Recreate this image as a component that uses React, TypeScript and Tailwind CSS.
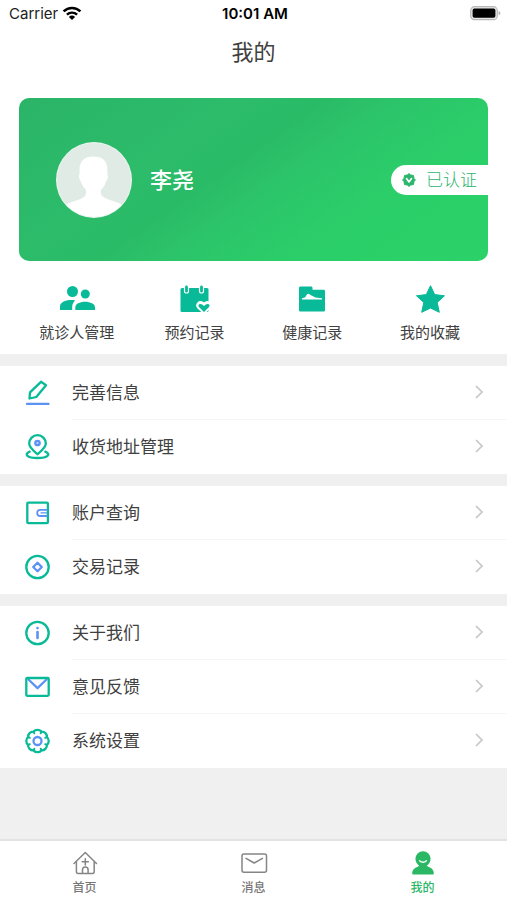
import type { ReactNode } from "react";

type Item = { label: string; icon: ReactNode };

const TEAL = "#08ba97";
const BLUE = "#5b93f5";

function WifiIcon() {
  return (
    <svg width="20" height="16" viewBox="0 0 20 16" aria-hidden="true" fill="none" stroke="#000" strokeWidth="2.600">
      <path d="M1.600 5.400a12 12 0 0 1 16.800 0" />
      <path d="M4.900 8.700a7.300 7.300 0 0 1 10.200 0" strokeWidth="2.400" />
      <path d="M10 14 6.900 10.900a4.400 4.400 0 0 1 6.200 0Z" fill="#000" stroke="none" />
    </svg>
  );
}

function BatteryIcon() {
  return (
    <svg width="31" height="16" viewBox="0 0 31 16" aria-hidden="true">
      <rect x="0.7" y="0.7" width="26.600" height="13" rx="3.800" fill="#e6e6e6" stroke="#b9b9b9" strokeWidth="1.200" />
      <rect x="2.600" y="2.600" width="22.800" height="9.200" rx="1.800" fill="#000" />
      <path d="M28.600 5.100v4.200c1-.4 1.700-1.200 1.700-2.100s-.7-1.700-1.700-2.100Z" fill="#b0b0b0" />
    </svg>
  );
}

function Avatar() {
  return (
    <svg className="shrink-0" width="76" height="76" viewBox="0 0 76 76" role="img" aria-label="头像">
      <defs>
        <clipPath id="avatar-circle">
          <circle cx="38" cy="38" r="37" />
        </clipPath>
      </defs>
      <circle cx="38" cy="38" r="38" fill="#eef5f0" />
      <circle cx="38" cy="38" r="37" fill="#e0ebe5" />
      <path
        clipPath="url(#avatar-circle)"
        fill="#fff"
        d="M37.500 14.500c-9 0-14 4.500-14 13v5c-1 .6-.8 4.500 1.500 7.200 1.200 3.800 3.200 6.600 5 8.300 0 3-.1 4.800-.9 6C27 57 16 59.500 10 62.500V80h56V62.500C60 59.500 49 57 46 54c-.9-1.200-1.100-3-1.100-6 1.900-1.700 3.900-4.500 5-8.300 2.300-2.700 2.500-6.600 1.500-7.200v-5c0-8.500-5-13-13.900-13Z"
      />
    </svg>
  );
}

function VerifiedIcon() {
  return (
    <svg width="14" height="14" viewBox="0 0 14 14" aria-hidden="true">
      <path
        fill="#2cb56c"
        stroke="#2cb56c"
        strokeLinejoin="round"
        d="m7 .6 1.600 1.300 2.900.6.500 2.900L13.400 7l-1.400 1.600-.5 2.900-2.900.6L7 13.400l-1.600-1.300-2.900-.6L2 8.600.6 7 2 5.400l.5-2.900 2.900-.6Z"
      />
      <path d="m4.500 5.600 2.500 3.300 2.500-3.300" fill="none" stroke="#fff" strokeWidth="1.700" strokeLinecap="round" strokeLinejoin="round" />
    </svg>
  );
}

function Chevron() {
  return (
    <svg className="shrink-0" width="10" height="14" viewBox="0 0 10 14" fill="none" stroke="#c7c7c7" strokeWidth="1.700" aria-hidden="true">
      <path d="m1 1 6 6-6 6" />
    </svg>
  );
}

const shortcuts: Item[] = [
  {
    label: "就诊人管理",
    icon: (
      <svg width="36" height="30" viewBox="0 0 36 30" fill={TEAL} aria-hidden="true">
        <circle cx="13.500" cy="7.500" r="5.500" />
        <circle cx="26.300" cy="10" r="4.500" />
        <path d="M1 26v-3.500c0-4 5-6.500 11-6.500 1.500 0 3 .1 4.200.5-1.700 1.500-3 3.500-3 6V26Z" />
        <path d="M16.300 26v-2.500c0-3.500 4.300-5.700 9.700-5.700s10 2.200 10 5.700V26Z" />
      </svg>
    ),
  },
  {
    label: "预约记录",
    icon: (
      <svg width="32" height="30" viewBox="0 0 32 30" aria-hidden="true">
        <rect x="1.500" y="4" width="28" height="24" rx="1.500" fill={TEAL} />
        <path d="M7.500 2v5M22.500 2v5" stroke="#fff" strokeWidth="5.200" strokeLinecap="round" />
        <path d="M7.500 3v4.200M22.500 3v4.200" stroke={TEAL} strokeWidth="2.800" strokeLinecap="round" />
        <path
          d="m25 27.500-5-4.600c-1.700-2.200.6-4.700 3.200-3l1.800 1.300 1.800-1.300c2.600-1.700 4.900.8 3.200 3Z"
          fill={TEAL}
          stroke="#fff"
          strokeWidth="4.400"
          strokeLinejoin="round"
        />
        <path d="m25 28-5-4.900c-1.700-2.200.6-4.300 3.200-2.600l1.800 1.500 1.800-1.500c2.600-1.700 4.900.4 3.200 2.600Z" fill={TEAL} />
      </svg>
    ),
  },
  {
    label: "健康记录",
    icon: (
      <svg width="28" height="30" viewBox="0 0 28 30" aria-hidden="true">
        <path d="M2.500 2.500H13c1 0 1.500.6 1.500 1.500V5.700h11c1 0 1.500.6 1.500 1.500V26c0 1-.6 1.500-1.500 1.500h-23C1.600 27.500 1 27 1 26V4C1 3.100 1.600 2.500 2.500 2.500Z" fill={TEAL} />
        <path d="M4 14.300 7 13.500l2.200-3.500 1.300-.3 2.500 1.600 4.500 2.100 6.500.9v1.100H4Z" fill="#fff" />
      </svg>
    ),
  },
  {
    label: "我的收藏",
    icon: (
      <svg width="32" height="30" viewBox="0 0 32 30" aria-hidden="true">
        <path
          d="m16.500 1.700 4.200 8.900 9.800 1.200-7.300 6.700 2.100 9.800-8.800-4.300-8.800 4.300 2.100-9.800-7.300-6.700 9.800-1.200Z"
          fill={TEAL}
          stroke={TEAL}
          strokeLinejoin="round"
        />
      </svg>
    ),
  },
];

function LineIcon({ children }: { children: ReactNode }) {
  return (
    <svg className="shrink-0" width="26" height="26" viewBox="0 0 26 26" fill="none" stroke={TEAL} strokeWidth="2.300" strokeLinejoin="round" strokeLinecap="round" aria-hidden="true">
      {children}
    </svg>
  );
}

const groups: Item[][] = [
  [
    {
      label: "完善信息",
      icon: (
        <LineIcon>
          <path d="M17 1.800 22 5.200 12.300 17 5.500 18.500 6 12.300Z" />
          <path d="M3 23.900h21.500" stroke={BLUE} />
        </LineIcon>
      ),
    },
    {
      label: "收货地址管理",
      icon: (
        <LineIcon>
          <path d="M13.500 20.200C10.500 17.600 5.200 13.600 5.200 9.500a8.300 8.300 0 0 1 16.600 0C21.800 13.600 16.500 17.600 13.500 20.200Z" />
          <path d="M5.700 17.600C0 20 2.500 24 13.500 24s13.500-4 7.800-6.400" />
          <circle cx="13.500" cy="9" r="2.200" stroke={BLUE} fill="#c4d8fa" />
        </LineIcon>
      ),
    },
  ],
  [
    {
      label: "账户查询",
      icon: (
        <LineIcon>
          <rect x="3.300" y="2.600" width="20.600" height="20.600" rx="1" />
          <g stroke={BLUE} strokeWidth="1.800">
            <path d="M22.800 9.800h-6.500a3 3 0 0 0 0 6.200h6.500" />
            <path d="M22.500 12.900H17" strokeWidth="1.200" />
          </g>
        </LineIcon>
      ),
    },
    {
      label: "交易记录",
      icon: (
        <LineIcon>
          <circle cx="13.500" cy="13" r="11.200" />
          <path d="M13.500 8.700 17.800 13l-4.300 4.300L9.200 13Z" stroke={BLUE} />
        </LineIcon>
      ),
    },
  ],
  [
    {
      label: "关于我们",
      icon: (
        <LineIcon>
          <circle cx="13.500" cy="13" r="11.200" />
          <path d="M13.500 8v.1M13.500 12v6" stroke={BLUE} strokeWidth="2.600" />
        </LineIcon>
      ),
    },
    {
      label: "意见反馈",
      icon: (
        <LineIcon>
          <path d="m4.500 5.500 9 8.700 9-8.700" stroke={BLUE} />
          <rect x="2.300" y="4" width="22.400" height="17.800" rx="1" />
        </LineIcon>
      ),
    },
    {
      label: "系统设置",
      icon: (
        <LineIcon>
          <g transform="translate(.5 0)">
            <path d="M22.400 16.900A5.100 5.100 0 0 1 16.900 22.400 5.100 5.100 0 0 1 9.100 22.400 5.100 5.100 0 0 1 3.600 16.900 5.100 5.100 0 0 1 3.600 9.100 5.100 5.100 0 0 1 9.100 3.600 5.100 5.100 0 0 1 16.900 3.600 5.100 5.100 0 0 1 22.400 9.100 5.100 5.100 0 0 1 22.400 16.900Z" />
            <path
              d="m22.400 16.900-1.700-.7M16.900 22.400l-.7-1.700M9.100 22.400l.7-1.700M3.600 16.900l1.700-.7M3.600 9.100l1.700.7M9.100 3.600l.7 1.700M16.900 3.600l-.7 1.700M22.400 9.100l-1.700.7"
              strokeWidth="2"
            />
            <circle cx="13" cy="13" r="4" stroke={BLUE} />
          </g>
        </LineIcon>
      ),
    },
  ],
];

const tabs: (Item & { active?: boolean })[] = [
  {
    label: "首页",
    icon: (
      <svg width="28" height="26" viewBox="0 0 28 26" fill="none" stroke="#858585" strokeWidth="1.500" strokeLinejoin="round" strokeLinecap="round" aria-hidden="true">
        <path d="M3 13.500 14.300 2.500l11.200 11" />
        <path d="M5.400 12v9.500c0 1.200.6 2 1.800 2h14.200c1.200 0 1.800-.8 1.800-2V12" />
        <path d="M11.500 23.300v-3.500a2.800 2.800 0 0 1 5.600 0v3.500M14.300 8.700v6.200M11.200 11.800h6.200" />
      </svg>
    ),
  },
  {
    label: "消息",
    icon: (
      <svg width="28" height="26" viewBox="0 0 28 26" fill="none" stroke="#858585" strokeWidth="1.500" strokeLinejoin="round" strokeLinecap="round" aria-hidden="true">
        <rect x="2" y="4" width="24.500" height="18.200" rx="2" />
        <path d="m6 8.300 8.200 4.700 8.200-4.700" />
      </svg>
    ),
  },
  {
    label: "我的",
    active: true,
    icon: (
      <svg width="28" height="26" viewBox="0 0 28 26" fill="#2ab865" aria-hidden="true">
        <circle cx="14" cy="8.800" r="7.600" />
        <path d="M10.500 13.500h7c0 2.300 1 3 3 3.800 2.500 1 4.300 3 4.300 6 0 .8-.4 1.200-1.200 1.200H4.400c-.8 0-1.200-.4-1.200-1.200 0-3 1.800-5 4.300-6 2-.8 3-1.500 3-3.800Z" />
        <path d="M10.500 10.800c2 1.700 5 1.700 7 0" fill="none" stroke="#fff" strokeWidth="1.300" strokeLinecap="round" />
      </svg>
    ),
  },
];

export default function App() {
  return (
    <div className="flex min-h-screen flex-col bg-[#f0f0f0] font-['Noto_Sans_CJK_SC',sans-serif] text-[#404040]">
      <header className="bg-white">
        <div className="grid h-7 grid-cols-3 items-center pr-[6px] pl-[9px] font-['Inter',sans-serif] text-[15px] text-black">
          <div className="flex items-center gap-1">
            <span className="text-[#222]">Carrier</span>
            <WifiIcon />
          </div>
          <time className="text-center font-semibold">10:01 AM</time>
          <div className="flex justify-end">
            <BatteryIcon />
          </div>
        </div>
        <h1 className="h-[70px] pt-[6px] text-center text-[22px] leading-8">我的</h1>
      </header>

      <main>
        <section className="bg-white">
          <div className="mx-[19px] flex h-[163px] items-center rounded-[10px] bg-[linear-gradient(145deg,#2bb468_0%,#2cbc6a_32%,#2abb67_44%,#2cc46a_54%,#2bce69_72%,#2bd268_100%)] pl-[37px]">
            <Avatar />
            <h2 className="ml-[18px] pb-[3px] text-[22px] font-medium text-white">李尧</h2>
            <div className="ml-auto flex h-[30px] items-center gap-[10px] rounded-l-full bg-white pr-[11px] pl-[11px] text-[17px] text-[#2cb56c]">
              <VerifiedIcon />
              <span className="pb-[2px] font-light">已认证</span>
            </div>
          </div>
          <div className="mx-[18px] grid h-[93px] grid-cols-4 pt-[23px]">
            {shortcuts.map((item) => (
              <button key={item.label} type="button" className="flex flex-col items-center gap-[6px] text-[15px] leading-6">
                {item.icon}
                <span className="whitespace-nowrap">{item.label}</span>
              </button>
            ))}
          </div>
        </section>

        {groups.map((group) => (
          <ul key={group[0].label} className="mt-3 bg-white">
            {group.map((item, index) => (
              <li key={item.label}>
                <button type="button" className="flex h-[54px] w-full items-center pl-6 text-left text-[17px]">
                  {item.icon}
                  <span
                    className={
                      index === group.length - 1
                        ? "ml-[22px] flex h-full flex-1 items-center justify-between pr-[22px] pb-[2px]"
                        : "ml-[22px] flex h-full flex-1 items-center justify-between border-b border-[#f6f6f6] pr-[22px] pb-px"
                    }
                  >
                    {item.label}
                    <Chevron />
                  </span>
                </button>
              </li>
            ))}
          </ul>
        ))}
      </main>

      <nav className="mt-auto grid h-[61px] grid-cols-3 border-t-2 border-[#e3e3e3] bg-white pt-[9px]">
        {tabs.map((tab) => (
          <a
            key={tab.label}
            href="#"
            aria-current={tab.active ? "page" : undefined}
            className={
              tab.active
                ? "flex flex-col items-center gap-[3px] text-[12px] leading-4 font-medium text-[#2ab865]"
                : "flex flex-col items-center gap-[3px] text-[12px] leading-4 font-medium text-[#777]"
            }
          >
            {tab.icon}
            {tab.label}
          </a>
        ))}
      </nav>
    </div>
  );
}
